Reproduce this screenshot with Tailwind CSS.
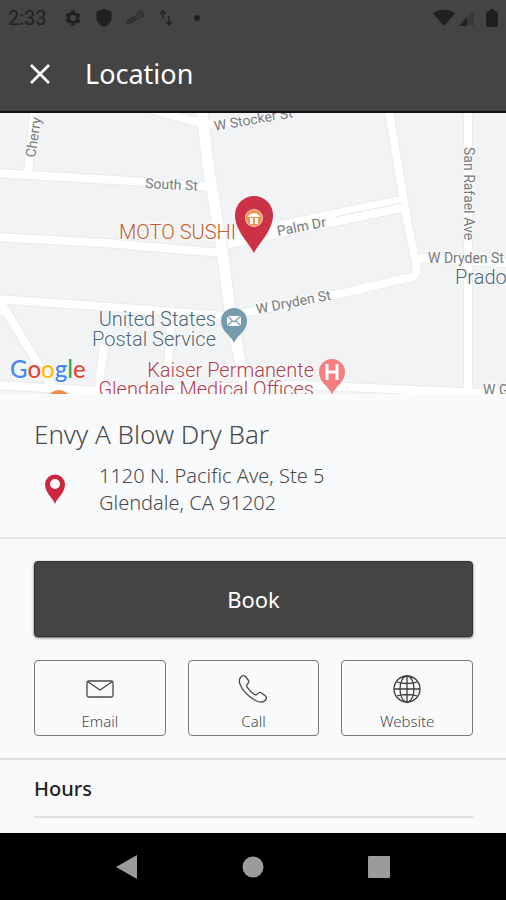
<!DOCTYPE html>
<html lang="en">
<head>
    <meta charset="UTF-8">
    <meta name="viewport" content="width=device-width, initial-scale=1.0">
    <title>Location</title>
    <script src="https://cdn.jsdelivr.net/npm/@tailwindcss/browser@4"></script>
</head>
<body class="min-h-screen flex flex-col bg-[#f9fafc] font-['Noto_Sans','Open_Sans',sans-serif] text-[#4a4a4c]">

    <!-- Status bar -->
    <div class="flex items-center h-9 px-2 bg-[#444444] text-[#202020]">
        <span class="font-['Roboto',sans-serif] text-[20px] w-14">2:33</span>
        <svg class="w-[18px] h-[18px]" viewBox="0 0 24 24" fill="currentColor">
            <path fill-rule="evenodd" d="M19.4 13a7.500 7.500 0 0 0 0-2l2.100-1.600a.5.5 0 0 0 .1-.7l-2-3.400a.5.5 0 0 0-.6-.2l-2.500 1a7.300 7.300 0 0 0-1.700-1l-.4-2.600a.5.5 0 0 0-.5-.5h-4a.5.5 0 0 0-.5.5l-.4 2.600a7.300 7.300 0 0 0-1.700 1l-2.500-1a.5.5 0 0 0-.6.2l-2 3.400a.5.5 0 0 0 .1.7L4.600 11a7.500 7.500 0 0 0 0 2l-2.100 1.600a.5.5 0 0 0-.1.7l2 3.400c.1.2.4.3.6.2l2.500-1a7.300 7.300 0 0 0 1.700 1l.4 2.600c0 .3.2.5.5.5h4c.3 0 .5-.2.5-.5l.4-2.600a7.300 7.300 0 0 0 1.700-1l2.500 1c.2.1.5 0 .6-.2l2-3.400a.5.5 0 0 0-.1-.7zM12 16a4 4 0 1 1 0-8 4 4 0 0 1 0 8z"/>
        </svg>
        <svg class="w-[18px] h-[18px] ml-[13px]" viewBox="0 0 18 18" fill="currentColor">
            <path d="M9 0l7.500 2.500V9c0 4-3 7.500-7.500 9-4.500-1.500-7.500-5-7.500-9V2.500z"/>
        </svg>
        <svg class="w-5 h-[18px] ml-3 text-[#303030]" viewBox="0 0 20 18" fill="none" stroke="currentColor" stroke-width="1.500">
            <path d="M18.500 4.500l-3 1.500-1-2 2.500-2c-3-.5-5 1-4.500 4L3 11.500c-2 1.500-1 4 1 3L14 8.500c2.500.5 4.500-1 4.500-4zM2 13.500l8-5M4 15l9-6"/>
        </svg>
        <svg class="w-[14px] h-[18px] ml-[14px]" viewBox="0 0 14 18" fill="none" stroke="currentColor" stroke-width="1.400">
            <path d="M4 10V2M1 5l3-3 3 3M10 7v9M7 13l3 3 3-3"/>
        </svg>
        <span class="w-[6px] h-[6px] rounded-full bg-current ml-[21px]"></span>
        <svg class="w-[22px] h-4 ml-auto" viewBox="0 0 22 16" fill="currentColor">
            <path d="M0 3.500C6-1.200 16-1.200 22 3.500L11 16z"/>
        </svg>
        <svg class="w-[15px] h-4 ml-1" viewBox="0 0 15 16" fill="currentColor">
            <path d="M15 0v16H0z" opacity=".3"/>
            <path d="M8 7.500V16H0z"/>
        </svg>
        <svg class="w-3 h-[18px] ml-3" viewBox="0 0 12 18" fill="currentColor">
            <path d="M4 0h4v2h2.500L12 3.500V17l-1 1H1l-1-1V3.500L1.500 2H4z"/>
        </svg>
    </div>

    <!-- App bar -->
    <header class="flex items-center h-[77px] pl-[29px] bg-[#444444] border-b-2 border-[#111111] text-white">
        <button aria-label="Close">
            <svg class="w-[22px] h-[22px]" viewBox="0 0 22 22" fill="none" stroke="currentColor" stroke-width="2.600">
                <path d="M2 2l18 18M20 2L2 20"/>
            </svg>
        </button>
        <h1 class="ml-[34px] text-[27px] leading-9">Location</h1>
    </header>

    <!-- Map -->
    <svg class="w-full block shrink-0 font-['Roboto',sans-serif]" viewBox="0 113 506 281" role="img" aria-label="Map">
        <rect y="113" width="506" height="281" fill="#f1f3f4"/>
        <g id="roads" fill="none" stroke-linejoin="round">
            <g stroke="#e9ebed">
                <path stroke-width="13" d="M201 105L208 165L222 250L230 310L248 400"/>
                <path stroke-width="10" d="M150 109L204 124L240 122M34 113L28 173M-5 173L130 181L210 187M-5 237L105 243L222 253M-5 299L110 307L228 316L330 296L412 277Q418 275 416 262L408 225L388 105M228 236L406 199M228 244L406 207M416 258L506 263M468 105V390M-5 293L54 390M-5 311L8 312M-5 385L100 391L300 385L506 394M104 345L98 394M172 310L166 394"/>
            </g>
            <g stroke="#ffffff">
                <path stroke-width="11" d="M201 105L208 165L222 250L230 310L248 400"/>
                <path stroke-width="8" d="M150 109L204 124L240 122M34 113L28 173M-5 173L130 181L210 187M-5 237L105 243L222 253M-5 299L110 307L228 316L330 296L412 277Q418 275 416 262L408 225L388 105M228 236L406 199M228 244L406 207M416 258L506 263M468 105V390M-5 293L54 390M-5 311L8 312M-5 385L100 391L300 385L506 394M104 345L98 394M172 310L166 394"/>
            </g>
            <path stroke="#e6e8ea" d="M335 217L402 203"/>
        </g>
        <g fill="#7b7b7d" stroke="#f8f9fa" stroke-width="3" paint-order="stroke" font-size="14">
            <text transform="translate(35 158) rotate(-81)">Cherry</text>
            <text transform="translate(215 131) rotate(-10)">W Stocker St</text>
            <text transform="translate(145 188) rotate(3)">South St</text>
            <text transform="translate(278 236) rotate(-11)">Palm Dr</text>
            <text transform="translate(464 147) rotate(90)">San Rafael Ave</text>
            <text transform="translate(257 314) rotate(-11)">W Dryden St</text>
            <text x="428" y="263">W Dryden St</text>
            <text x="483" y="395">W G</text>
        </g>
        <g font-size="20" font-weight="300" stroke="#f8f9fa" stroke-width="3" paint-order="stroke" text-anchor="end">
            <text x="236" y="239" fill="#c65b28">MOTO SUSHI</text>
            <text x="216" y="326" fill="#4b6675">United States</text>
            <text x="216" y="346" fill="#4b6675">Postal Service</text>
            <text x="314" y="377" fill="#b33f4a">Kaiser Permanente</text>
            <text x="314" y="396" fill="#b33f4a">Glendale Medical Offices</text>
            <text x="455" y="284" fill="#4b6675" text-anchor="start">Prado</text>
        </g>
        <!-- selected place -->
        <path fill="#cb3147" d="M254 253C250 244 235 231 235 215a19 19 0 0 1 38 0C273 231 258 244 254 253z"/>
        <circle cx="254" cy="218" r="9" fill="#f9d5bd"/>
        <circle cx="254" cy="218" r="8" fill="#f4924f"/>
        <path fill="#ffffff" d="M248 217c1-5 11-5 12 0zM250 218h3v6h-3zM255 218h3v6h-3z"/>
        <!-- post office -->
        <path fill="#769bad" d="M234 343C232 336 221 332 221 321a13 13 0 0 1 26 0C247 332 236 336 234 343z"/>
        <path fill="#ffffff" d="M227 316h14v10h-14z"/>
        <path fill="none" stroke="#769bad" stroke-width="1.300" d="M227 316l7 6 7-6M227 326l5-5M241 326l-5-5"/>
        <!-- hospital -->
        <path fill="#f57f80" d="M332 395C330 387 319 383 319 372a13 13 0 0 1 26 0C345 383 334 387 332 395z"/>
        <path fill="none" stroke="#ffffff" stroke-width="3" d="M327 364v16M337 364v16M327 372h10"/>
        <circle cx="59" cy="402" r="12" fill="#f38b4a"/>
        <text x="10" y="378" font-family="Lato, sans-serif" font-weight="500" font-size="24" stroke="#f8f9fa" stroke-width="2" paint-order="stroke"><tspan fill="#4285f4">G</tspan><tspan fill="#ea4335">o</tspan><tspan fill="#fbbc05">o</tspan><tspan fill="#4285f4">g</tspan><tspan fill="#34a853">l</tspan><tspan fill="#ea4335">e</tspan></text>
    </svg>

    <!-- Address -->
    <section class="px-[34px] pt-6 pb-[21px] border-b-2 border-[#e6e7e9]">
        <h2 class="text-[26px] leading-8 font-light">Envy A Blow Dry Bar</h2>
        <div class="flex items-center mt-3">
            <svg class="w-[42px] h-[30px]" viewBox="0 0 42 30">
                <path fill="#cd2740" fill-rule="evenodd" d="M21 30C19 24 11 19 11 10.500a10 10 0 0 1 20 0C31 19 23 24 21 30zM21 15a5 5 0 1 0 0-10 5 5 0 0 0 0 10z"/>
            </svg>
            <address class="ml-[23px] text-[20px] leading-[27px] font-light not-italic">
                1120 N. Pacific Ave, Ste 5<br>
                Glendale, CA 91202
            </address>
        </div>
    </section>

    <!-- Actions -->
    <section class="pl-[34px] pr-[33px] py-[22px] border-b-2 border-[#dddfe1]">
        <button class="w-full h-[76px] rounded-sm border border-[#303030] bg-[#444444] text-white text-[22px] shadow-sm shadow-black/50">Book</button>
        <div class="grid grid-cols-3 gap-[22px] mt-[23px] text-[15px] leading-5 font-light">
            <button class="flex flex-col items-center justify-end h-[76px] pb-1 rounded border border-[#777777]">
                <svg class="w-[30px] h-[30px]" viewBox="0 0 30 30" fill="none" stroke="#4a4a4a" stroke-width="1.300">
                    <rect x="2" y="7" width="26" height="16" rx="1.500"/>
                    <path d="M2.500 7.500L15 16l12.500-8.500"/>
                </svg>
                <span class="mt-[7px]">Email</span>
            </button>
            <button class="flex flex-col items-center justify-end h-[76px] pb-1 rounded border border-[#777777]">
                <svg class="w-[30px] h-[30px]" viewBox="0 0 30 30" fill="none" stroke="#4a4a4a" stroke-width="1.300" stroke-linejoin="round">
                    <path d="M2.500 3.500C4 1.500 6 1 7.500 2.500l3 4c1 1.500 0 2.500-1 3.500-1 1-1.200 2 0 3.700 1.800 2.600 4 4.800 6.600 6.500 1.600 1 2.400.8 3.400-.4 1-1.200 2.500-1.800 4-.8l4 3c1.500 1.300 1.300 3-.3 4.500-2.500 2.300-6 2-9.700 0C10.500 22.500 5 17 2.300 11 1 8 1 5.500 2.500 3.500z"/>
                </svg>
                <span class="mt-[7px]">Call</span>
            </button>
            <button class="flex flex-col items-center justify-end h-[76px] pb-1 rounded border border-[#777777]">
                <svg class="w-[30px] h-[30px]" viewBox="0 0 30 30" fill="none" stroke="#3c3c3c" stroke-width="1.300">
                    <circle cx="15" cy="15" r="13"/>
                    <ellipse cx="15" cy="15" rx="7" ry="13"/>
                    <path d="M15 2v26M2 15h26M4.500 8q10.500 3 21 0M4.500 22q10.500-3 21 0"/>
                </svg>
                <span class="mt-[7px]">Website</span>
            </button>
        </div>
    </section>

    <!-- Hours -->
    <section class="pl-[34px] pr-[33px]">
        <h3 class="pt-4 pb-[14px] border-b-2 border-[#dddfe1] text-[20px] leading-[26px] font-medium text-[#222222]">Hours</h3>
    </section>

    <!-- System navigation -->
    <nav class="mt-auto flex items-center justify-center gap-[102px] h-[67px] bg-black text-[#9b9b9b]">
        <button aria-label="Back">
            <svg class="w-6 h-6" viewBox="0 0 24 24" fill="currentColor"><path d="M1 12L22 0v24z"/></svg>
        </button>
        <button aria-label="Home">
            <svg class="w-6 h-6" viewBox="0 0 24 24" fill="currentColor"><circle cx="12" cy="12" r="10.500"/></svg>
        </button>
        <button aria-label="Recent apps">
            <svg class="w-6 h-6" viewBox="0 0 24 24" fill="currentColor"><rect x="1" y="1" width="22" height="22" rx="1"/></svg>
        </button>
    </nav>
</body>
</html>
